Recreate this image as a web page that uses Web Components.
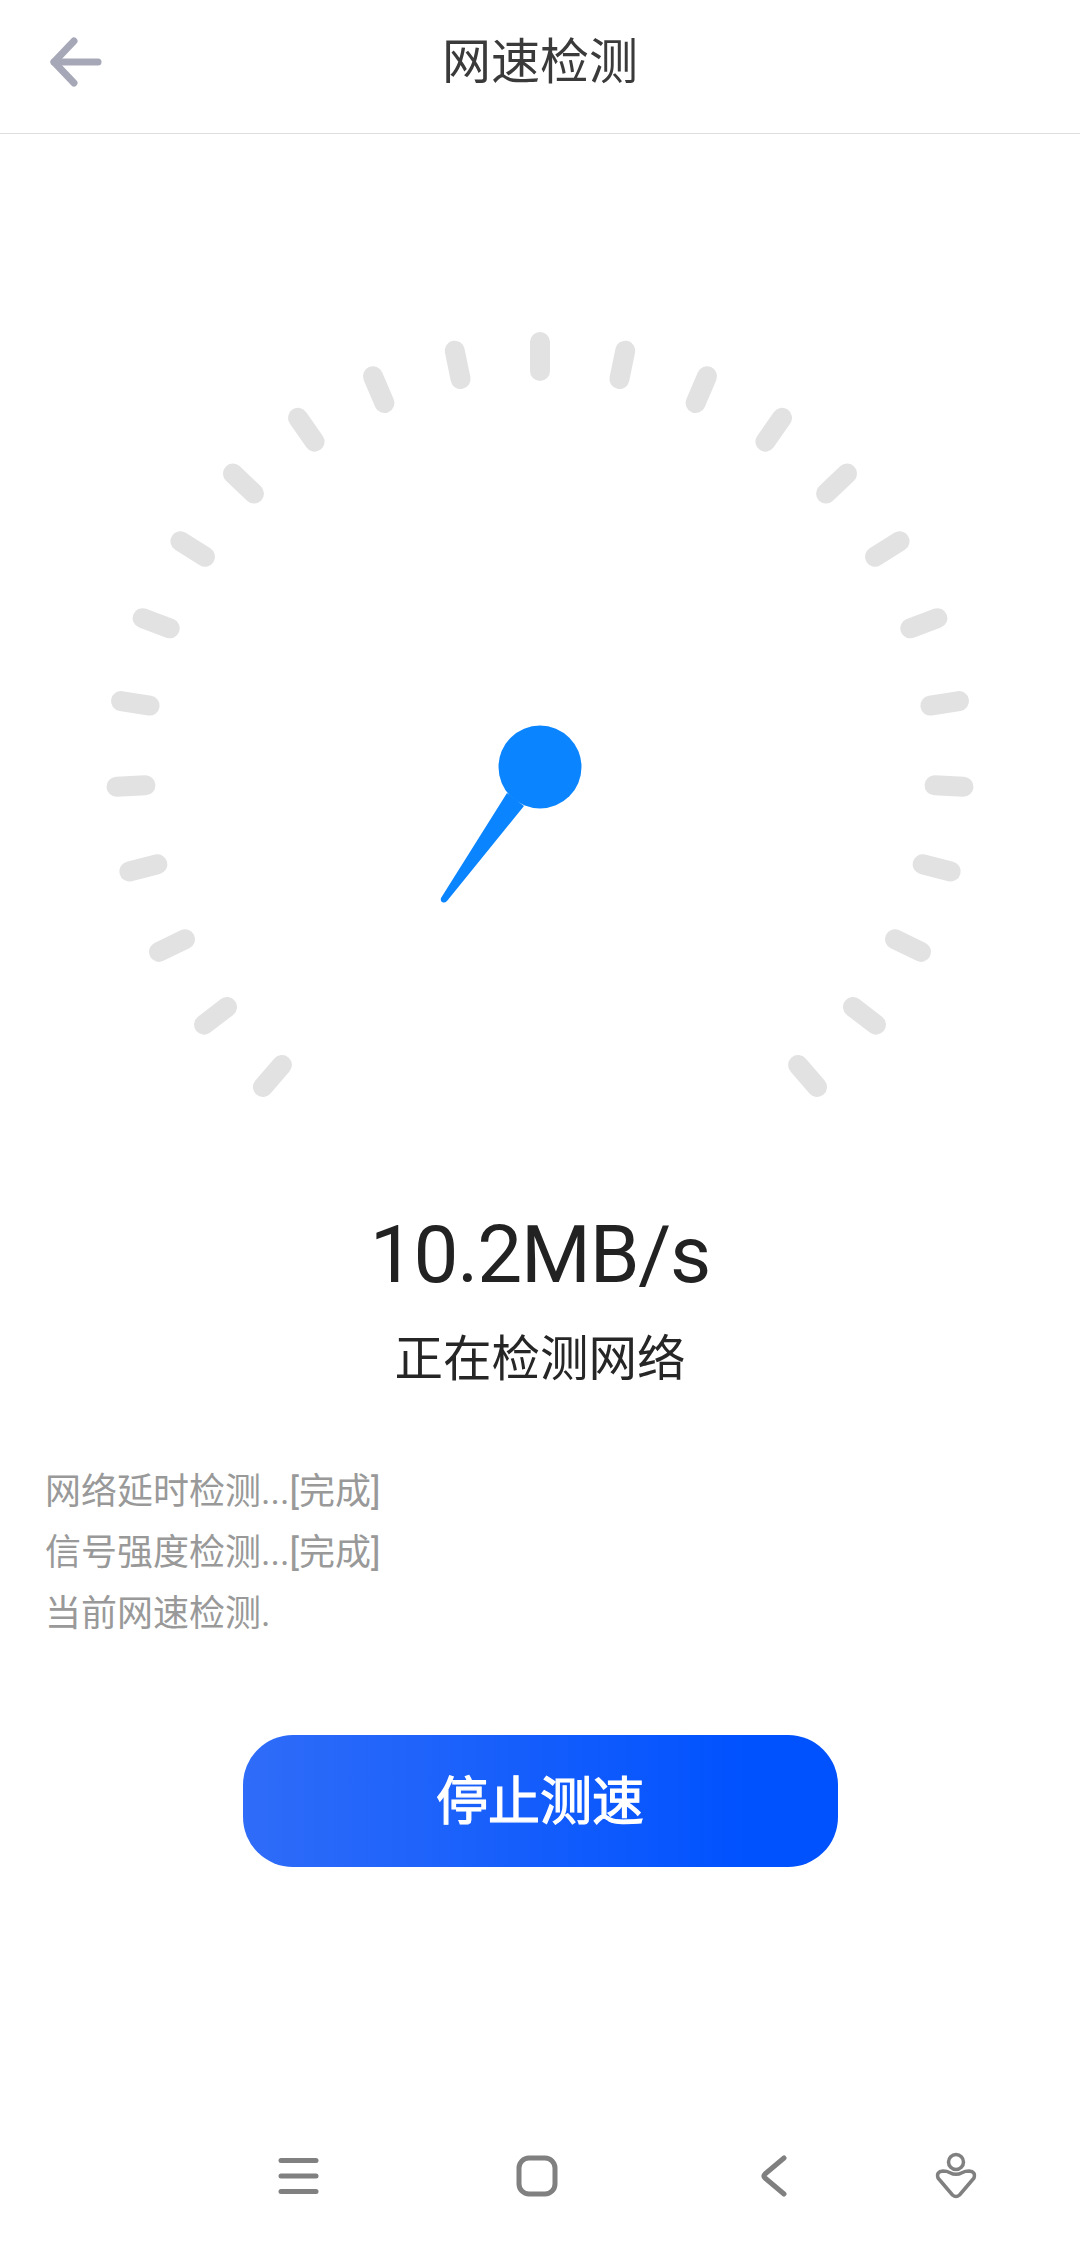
<!DOCTYPE html>
<html lang="zh-CN">
<head>
<meta charset="utf-8">
<title>网速检测</title>
<style>
  html, body { margin: 0; background: #fff; }
  body { font-family: Roboto, "Noto Sans CJK SC", sans-serif; }
</style>
</head>
<body>
<speed-app>
  <speed-header>网速检测</speed-header>
  <speed-gauge></speed-gauge>
  <speed-readout value="10.2MB/s">正在检测网络</speed-readout>
  <check-log>
    <div>网络延时检测...[完成]</div>
    <div>信号强度检测...[完成]</div>
    <div>当前网速检测.</div>
  </check-log>
  <stop-button>停止测速</stop-button>
  <nav-bar></nav-bar>
</speed-app>

<script>
// Page column
class SpeedApp extends HTMLElement {
  constructor() {
    super();
    this.attachShadow({ mode: 'open' });
  }
  connectedCallback() {
    this.shadowRoot.innerHTML = `
      <style>
        :host {
          display: flex;
          flex-direction: column;
          width: 1080px;
          height: 2241px;
          background: #fff;
          overflow: hidden;
        }
      </style>
      <slot></slot>
    `;
  }
}

// Top bar
class SpeedHeader extends HTMLElement {
  constructor() {
    super();
    this.attachShadow({ mode: 'open' });
  }
  connectedCallback() {
    this.shadowRoot.innerHTML = `
      <style>
        :host {
          display: flex;
          flex: none;
          align-items: center;
          justify-content: center;
          position: relative;
          height: 125px;
          padding-bottom: 8px;
          border-bottom: 1px solid #dfdfdf;
          font-size: 49px;
          line-height: 60px;
          color: #3a3a3a;
        }
        svg {
          position: absolute;
          left: 46px;
          top: 34px;
        }
      </style>
      <svg width="60" height="56" viewBox="0 0 60 56" fill="none" stroke="#a6a8b8" stroke-width="7" stroke-linecap="round" stroke-linejoin="round">
        <path d="M28 7 L8 28 L28 49"/>
        <path d="M8 28 H52"/>
      </svg>
      <slot></slot>
    `;
  }
}

// Dial with ticks and needle
class SpeedGauge extends HTMLElement {
  constructor() {
    super();
    this.attachShadow({ mode: 'open' });
  }
  connectedCallback() {
    let ticks = '';
    for (let i = -12; i <= 12; i++) {
      ticks += `<line x1="540" y1="342" x2="540" y2="371" transform="rotate(${i * 11.6} 540 766)"/>`;
    }
    this.shadowRoot.innerHTML = `
      <style>
        :host {
          display: block;
          flex: none;
          height: 1066px;
        }
        svg { display: block; }
      </style>
      <svg width="1080" height="1066" viewBox="0 134 1080 1066">
        <g stroke="#e2e2e2" stroke-width="20" stroke-linecap="round">${ticks}</g>
        <path d="M507 793 L441 898 Q440 902 443 902.5 Q445 903 447 901 L524 806 Z" fill="#0a84ff"/>
        <circle cx="540" cy="767" r="41.5" fill="#0a84ff"/>
      </svg>
    `;
  }
}

// Current speed and status
class SpeedReadout extends HTMLElement {
  constructor() {
    super();
    this.attachShadow({ mode: 'open' });
  }
  connectedCallback() {
    const value = this.getAttribute('value') || '';
    this.shadowRoot.innerHTML = `
      <style>
        :host {
          display: block;
          flex: none;
          text-align: center;
          color: #262626;
        }
        .value {
          font-size: 80px;
          line-height: 110px;
          letter-spacing: -1.2px;
          color: #222;
        }
        .status {
          margin-top: 20px;
          font-size: 48.5px;
          line-height: 60px;
        }
      </style>
      <div class="value">${value}</div>
      <div class="status"><slot></slot></div>
    `;
  }
}

// Progress lines
class CheckLog extends HTMLElement {
  constructor() {
    super();
    this.attachShadow({ mode: 'open' });
  }
  connectedCallback() {
    this.shadowRoot.innerHTML = `
      <style>
        :host {
          display: block;
          flex: none;
          margin-top: 72px;
          padding-left: 45px;
          font-size: 36px;
          line-height: 61px;
          color: #999;
        }
      </style>
      <slot></slot>
    `;
  }
}

// Blue pill button
class StopButton extends HTMLElement {
  constructor() {
    super();
    this.attachShadow({ mode: 'open' });
  }
  connectedCallback() {
    this.shadowRoot.innerHTML = `
      <style>
        :host {
          display: block;
          flex: none;
          margin-top: 90px;
          align-self: center;
        }
        button {
          display: block;
          width: 595px;
          height: 132px;
          border: none;
          padding: 0 0 7px;
          border-radius: 50px;
          background: linear-gradient(90deg, #2f6cf8 0%, #0052ff 85%);
          color: #fff;
          font-family: inherit;
          font-size: 52px;
          font-weight: 400;
          -webkit-text-stroke: 1.2px #fff;
        }
      </style>
      <button><slot></slot></button>
    `;
  }
}

// System navigation bar
class NavBar extends HTMLElement {
  constructor() {
    super();
    this.attachShadow({ mode: 'open' });
  }
  connectedCallback() {
    this.shadowRoot.innerHTML = `
      <style>
        :host {
          display: flex;
          flex: none;
          align-items: center;
          height: 130px;
          margin-top: auto;
          padding-left: 278px;
        }
        svg { display: block; flex: none; }
        .home { margin-left: 196px; }
        .back { margin-left: 202px; }
        .person { margin-left: 145px; }
      </style>
      <svg width="42" height="40" viewBox="0 0 42 40" fill="none" stroke="#808080" stroke-width="5" stroke-linecap="round">
        <path d="M3 4.5 H38"/><path d="M3 20 H38"/><path d="M3 35.5 H38"/>
      </svg>
      <svg class="home" width="42" height="42" viewBox="0 0 42 42" fill="none" stroke="#808080" stroke-width="5">
        <rect x="3" y="3" width="36" height="36" rx="10"/>
      </svg>
      <svg class="back" width="28" height="42" viewBox="0 0 28 42" fill="none" stroke="#808080" stroke-width="5" stroke-linecap="round" stroke-linejoin="round">
        <path d="M24 3 L5 19 Q3 21 5 23 L24 39"/>
      </svg>
      <svg class="person" width="46" height="50" viewBox="0 0 46 50" fill="none" stroke="#808080" stroke-width="3.5" stroke-linejoin="round">
        <circle cx="23" cy="11" r="7.5"/>
        <path d="M10 20 Q14 20 17 21.7 Q23 25 29 21.7 Q32 20 36 20 Q43 20.5 41 27 L26.5 44 Q23 47 19.5 44 L5 27 Q3 20.5 10 20 Z"/>
      </svg>
    `;
  }
}

// Register Components
customElements.define('speed-app', SpeedApp);
customElements.define('speed-header', SpeedHeader);
customElements.define('speed-gauge', SpeedGauge);
customElements.define('speed-readout', SpeedReadout);
customElements.define('check-log', CheckLog);
customElements.define('stop-button', StopButton);
customElements.define('nav-bar', NavBar);
</script>
</body>
</html>
